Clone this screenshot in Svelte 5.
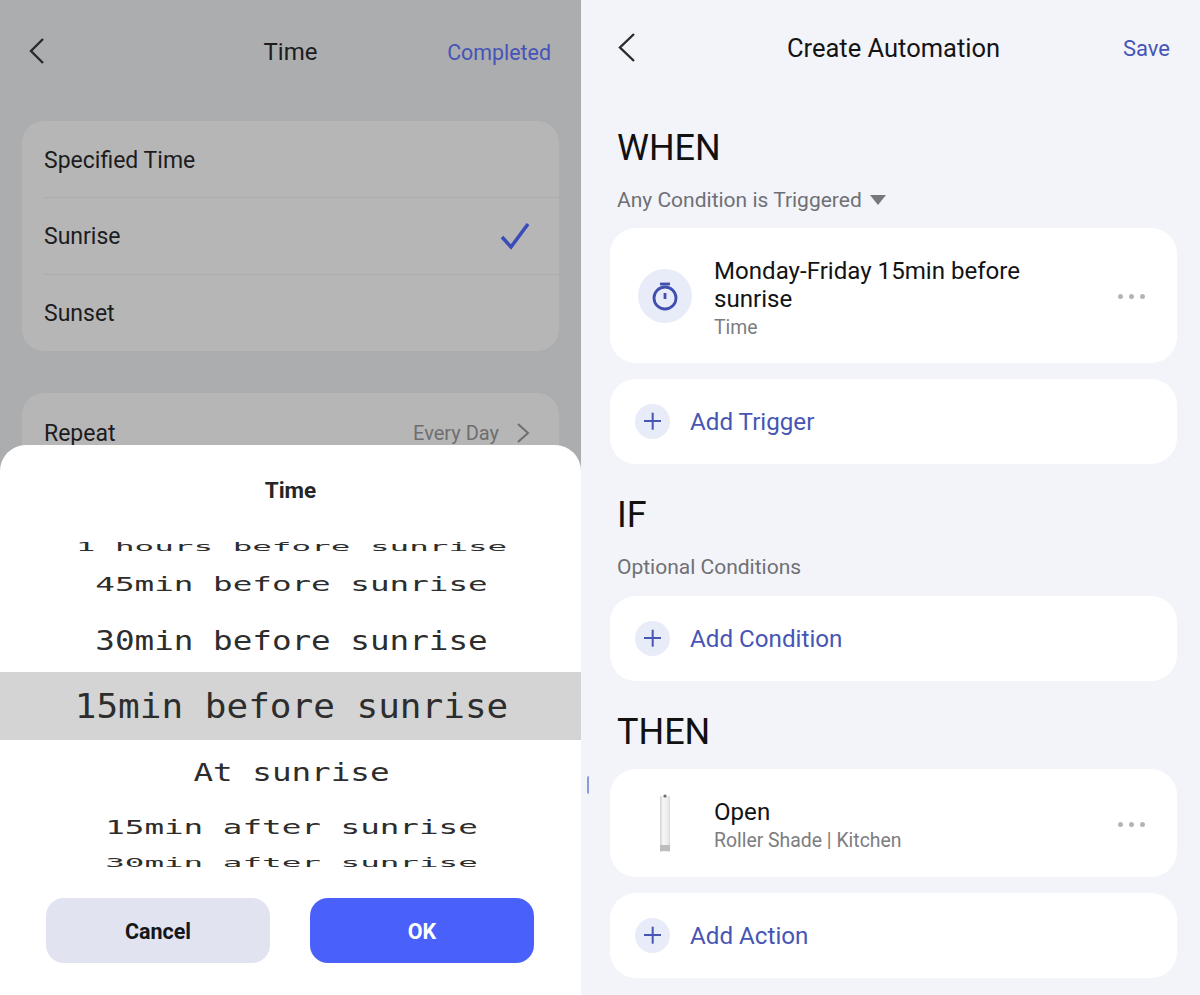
<script>
  const wheel = [
    { label: "1 hours before sunrise", cls: "first" },
    { label: "45min before sunrise", cls: "second" },
    { label: "30min before sunrise", cls: "third" },
    { label: "15min before sunrise", cls: "current" },
    { label: "At sunrise", cls: "fifth" },
    { label: "15min after sunrise", cls: "sixth" },
    { label: "30min after sunrise", cls: "last" }
  ];
</script>

<div class="page">
  <section class="left">
    <header class="nav left-nav">
      <svg class="back" width="15" height="26" viewBox="0 0 15 26"><path d="M14 1 L2 13 L14 25" /></svg>
      <h1>Time</h1>
      <span class="link">Completed</span>
    </header>

    <div class="group options">
      <div class="option">Specified Time</div>
      <div class="option">
        Sunrise
        <svg width="30" height="28" viewBox="0 0 30 28"><path d="M2 15 L11 25 L28 2" /></svg>
      </div>
      <div class="option">Sunset</div>
    </div>

    <div class="group repeat">
      <span>Repeat</span>
      <span class="repeat-value">Every Day
        <svg width="14" height="22" viewBox="0 0 14 22"><path d="M2 2 L12 11 L2 20" /></svg>
      </span>
    </div>

    <div class="sheet">
      <h2>Time</h2>
      <div class="wheel">
        {#each wheel as row}
          <div class="row {row.cls}"><span>{row.label}</span></div>
        {/each}
      </div>
      <div class="buttons">
        <button class="cancel">Cancel</button>
        <button class="ok">OK</button>
      </div>
    </div>
  </section>

  <i class="sliver"></i>

  <section class="right">
    <header class="nav right-nav">
      <svg class="back" width="17" height="29" viewBox="0 0 17 29"><path d="M16 1 L2 14.5 L16 28" /></svg>
      <h1>Create Automation</h1>
      <span class="link">Save</span>
    </header>

    <h3 class="when">WHEN</h3>
    <div class="sub">Any Condition is Triggered <i class="caret"></i></div>

    <div class="card trigger">
      <div class="round">
        <svg width="28" height="30" viewBox="0 0 28 30">
          <path d="M9 3 H19" />
          <circle cx="14" cy="17" r="11" />
          <path d="M14 12 V18" />
        </svg>
      </div>
      <div class="text">
        <div class="title">Monday-Friday 15min before<br />sunrise</div>
        <div class="meta">Time</div>
      </div>
      <div class="dots"><i></i><i></i><i></i></div>
    </div>

    <div class="card add">
      <span class="plus"></span>
      Add Trigger
    </div>

    <h3 class="if">IF</h3>
    <div class="sub optional">Optional Conditions</div>

    <div class="card add">
      <span class="plus"></span>
      Add Condition
    </div>

    <h3 class="then">THEN</h3>

    <div class="card action">
      <div class="shade">
        <svg width="14" height="60" viewBox="0 0 14 60">
          <defs>
            <linearGradient id="tube" x1="0" x2="1" y1="0" y2="0">
              <stop offset="0" stop-color="#d2d2d2" />
              <stop offset="0.3" stop-color="#f6f6f6" />
              <stop offset="0.8" stop-color="#ececec" />
              <stop offset="1" stop-color="#d8d8d8" />
            </linearGradient>
          </defs>
          <rect x="2" y="3" width="10" height="56" rx="1" fill="url(#tube)" />
          <rect x="2" y="52" width="10" height="6" fill="#bdbdbd" />
          <circle cx="7" cy="3" r="1.6" fill="#6a6a6a" />
        </svg>
      </div>
      <div class="text">
        <div class="title">Open</div>
        <div class="meta">Roller Shade | Kitchen</div>
      </div>
      <div class="dots"><i></i><i></i><i></i></div>
    </div>

    <div class="card add">
      <span class="plus"></span>
      Add Action
    </div>
  </section>
</div>

<style>
  :global(body) {
    margin: 0;
    font-family: Roboto, "Liberation Sans", sans-serif;
  }
  .page {
    position: relative;
    display: flex;
    width: 1200px;
    height: 995px;
    overflow: hidden;
    background: #f3f4f9;
  }
  .left {
    position: relative;
    box-sizing: border-box;
    width: 581px;
    height: 995px;
    padding: 0 22px;
    background: #acadaf;
    color: #1c1c1e;
  }
  .right {
    box-sizing: border-box;
    flex: 1;
    padding: 0 23px 0 29px;
    color: #141416;
  }
  .sliver {
    position: absolute;
    left: 587px;
    top: 776px;
    width: 2px;
    height: 18px;
    border-radius: 2px 0 0 2px;
    background: #8f99d6;
  }
  .nav {
    display: flex;
    align-items: center;
    justify-content: space-between;
    position: relative;
  }
  .nav h1 {
    position: absolute;
    left: 0;
    right: 0;
    margin: 0;
    text-align: center;
    font-size: 24px;
    font-weight: 400;
  }
  .left-nav {
    height: 104px;
    padding: 0 8px 0 7px;
  }
  .left-nav .back {
    margin-bottom: 3px;
  }
  .left-nav .link {
    font-size: 21.4px;
  }
  .right-nav {
    height: 96px;
    padding: 0 7px 0 7px;
  }
  .right-nav h1 {
    font-size: 25.5px;
    top: 33px;
  }
  .right-nav .back {
    margin-left: 1px;
    margin-bottom: 2px;
  }
  .back {
    position: relative;
    fill: none;
    stroke: #2b2b2e;
    stroke-width: 2.4;
  }
  .link {
    position: relative;
    font-size: 22px;
    color: #4654b8;
  }
  .group {
    background: #b6b6b6;
    border-radius: 22px;
    font-size: 23px;
  }
  .options {
    margin-top: 17px;
    height: 230px;
  }
  .option {
    display: flex;
    align-items: center;
    justify-content: space-between;
    height: 76px;
    margin-left: 22px;
    padding-right: 29px;
    border-top: 1px solid #adadad;
  }
  .option:first-child {
    border-top: 1px solid transparent;
    height: 73px;
    padding-top: 2px;
  }
  .option svg {
    fill: none;
    stroke: #3a4cba;
    stroke-width: 3.6;
  }
  .repeat {
    display: flex;
    justify-content: space-between;
    align-items: center;
    margin-top: 42px;
    height: 80px;
    padding: 0 29px 0 22px;
  }
  .repeat-value {
    display: flex;
    align-items: center;
    gap: 17px;
    font-size: 20px;
    color: #6e6e70;
  }
  .repeat-value svg {
    fill: none;
    stroke: #6e6e70;
    stroke-width: 2;
  }
  .sheet {
    position: absolute;
    left: 0;
    right: 0;
    top: 445px;
    bottom: 0;
    background: #fff;
    border-radius: 26px 26px 0 0;
  }
  .sheet h2 {
    margin: 31px 0 0;
    height: 28px;
    line-height: 28px;
    text-align: center;
    font-size: 22.5px;
    font-weight: 700;
    color: #262626;
  }
  .wheel {
    margin-top: 30px;
    font-family: "DejaVu Sans Mono", "Liberation Mono", monospace;
    font-size: 32.6px;
    color: #2d2d2d;
    text-align: center;
  }
  .row {
    display: flex;
    align-items: center;
    justify-content: center;
    white-space: pre;
  }
  .row span {
    display: block;
    margin-left: 2px;
  }
  .first {
    height: 26px;
  }
  .first span {
    transform: scaleY(0.38);
  }
  .second {
    height: 50px;
  }
  .second span {
    transform: translateY(-1px) scaleY(0.6);
  }
  .third {
    height: 62px;
  }
  .third span {
    transform: scaleY(0.8);
  }
  .current {
    height: 68px;
    font-size: 36px;
    background: #d4d4d4;
  }
  .current span {
    transform: scaleY(0.95);
  }
  .fifth {
    height: 62px;
  }
  .fifth span {
    transform: translateY(2px) scaleY(0.75);
  }
  .sixth {
    height: 50px;
  }
  .sixth span {
    transform: scaleY(0.6);
  }
  .last {
    height: 22px;
  }
  .last span {
    transform: scaleY(0.35);
  }
  .buttons {
    position: absolute;
    left: 46px;
    right: 47px;
    top: 453px;
    display: flex;
    justify-content: space-between;
  }
  .buttons button {
    width: 224px;
    height: 65px;
    padding-top: 2px;
    border: none;
    border-radius: 18px;
    font-family: inherit;
    font-size: 21.5px;
    font-weight: 700;
  }
  .cancel {
    background: #e1e3f1;
    color: #16161a;
  }
  .ok {
    background: #4a60fb;
    color: #fff;
  }
  h3 {
    margin: 0;
    font-size: 36px;
    font-weight: 400;
    line-height: 42px;
    padding-left: 7px;
    color: #111;
  }
  .when {
    margin-top: 31px;
  }
  .if {
    margin-top: 30px;
  }
  .then {
    margin-top: 30px;
    margin-bottom: 16px;
  }
  .sub {
    display: flex;
    align-items: center;
    gap: 8px;
    height: 28px;
    margin: 17px 0 14px;
    padding-left: 7px;
    font-size: 21px;
    color: #6f7075;
  }
  .sub.optional {
    margin-bottom: 15px;
  }
  .caret {
    width: 0;
    height: 0;
    border-left: 8px solid transparent;
    border-right: 8px solid transparent;
    border-top: 10px solid #77787c;
  }
  .card {
    display: flex;
    align-items: center;
    background: #fff;
    border-radius: 26px;
    position: relative;
    margin-bottom: 16px;
  }
  .trigger {
    height: 135px;
  }
  .action {
    height: 108px;
  }
  .add {
    height: 85px;
    font-size: 24.2px;
    color: #4755b5;
    gap: 20px;
    padding-left: 25px;
  }
  .plus {
    position: relative;
    width: 35px;
    height: 35px;
    border-radius: 50%;
    background: #e8ebf8;
  }
  .plus::before,
  .plus::after {
    content: "";
    position: absolute;
    background: #4755b5;
    left: 9px;
    right: 9px;
    top: 16px;
    height: 2.4px;
  }
  .plus::after {
    transform: rotate(90deg);
  }
  .round {
    display: flex;
    align-items: center;
    justify-content: center;
    width: 54px;
    height: 54px;
    margin-left: 28px;
    border-radius: 50%;
    background: #e8ebf8;
  }
  .round svg {
    fill: none;
    stroke: #3f4fb0;
    stroke-width: 2.8;
  }
  .text {
    flex: 1;
    margin-left: 22px;
    padding-top: 6px;
  }
  .action .text {
    padding-top: 5px;
  }
  .title {
    font-size: 24.1px;
    line-height: 28px;
    color: #131315;
  }
  .meta {
    margin-top: 2px;
    font-size: 19.4px;
    line-height: 26px;
    color: #7c7d80;
  }
  .shade {
    display: flex;
    justify-content: center;
    width: 54px;
    margin-left: 28px;
  }
  .dots {
    display: flex;
    gap: 6px;
    margin-right: 32px;
    margin-top: 2px;
  }
  .dots i {
    width: 5px;
    height: 5px;
    border-radius: 50%;
    background: #b4b5b9;
  }
</style>
